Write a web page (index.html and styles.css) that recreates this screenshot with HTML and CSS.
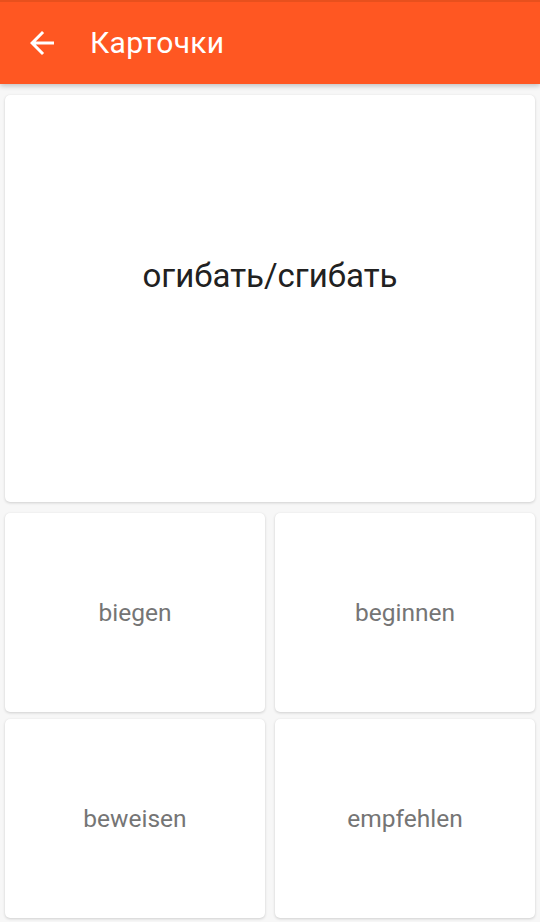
FILE: index.html
```html
<!DOCTYPE html>
<html lang="ru">
<head>
<meta charset="utf-8">
<link rel="stylesheet" href="styles.css">
</head>
<body>
<header class="appbar">
  <button class="back" aria-label="Назад">
    <svg viewBox="0 0 24 24" width="36" height="36"><path fill="#fff" d="M20 11H7.83l5.59-5.59L12 4l-8 8 8 8 1.41-1.41L7.83 13H20v-2z"/></svg>
  </button>
  <h1 class="title">Карточки</h1>
</header>
<main class="content">
  <section class="card card-main"><span class="word">огибать/сгибать</span></section>
  <div class="row">
    <section class="card card-option"><span class="option">biegen</span></section>
    <section class="card card-option"><span class="option">beginnen</span></section>
  </div>
  <div class="row">
    <section class="card card-option"><span class="option">beweisen</span></section>
    <section class="card card-option"><span class="option">empfehlen</span></section>
  </div>
</main>
</body>
</html>
```
FILE: styles.css
```css
* { box-sizing: border-box; }
html, body { margin: 0; padding: 0; }
body {
  width: 540px;
  height: 922px;
  overflow: hidden;
  background: #f7f7f7;
  font-family: Roboto, "Noto Sans", sans-serif;
}
.appbar {
  height: 84px;
  background: #ff5722;
  border-top: 2px solid #e8501d;
  display: flex;
  align-items: center;
  box-shadow: 0 2px 5px rgba(0,0,0,0.22);
  position: relative;
  z-index: 1;
}
.back {
  width: 36px;
  height: 36px;
  margin-left: 24px;
  padding: 0;
  border: 0;
  background: none;
  display: flex;
}
.title {
  margin: 0 0 2px 30px;
  color: #fff;
  font-weight: 400;
  font-size: 30px;
  letter-spacing: 0.3px;
}
.content {
  padding: 11px 5px 0;
  display: flex;
  flex-direction: column;
  gap: 7px;
}
.card {
  background: #fff;
  border-radius: 5px;
  box-shadow: 0 1px 3px rgba(0,0,0,0.16), 0 0 1px rgba(0,0,0,0.06);
  display: flex;
  align-items: center;
  justify-content: center;
}
.card-main {
  height: 407px;
  margin-bottom: 4px;
  padding-bottom: 46px;
}
.word {
  font-size: 33px;
  color: #212121;
}
.row {
  display: grid;
  grid-template-columns: 1fr 1fr;
  gap: 10px;
  height: 199px;
}
.option {
  font-size: 24.5px;
  color: #757575;
}
```
